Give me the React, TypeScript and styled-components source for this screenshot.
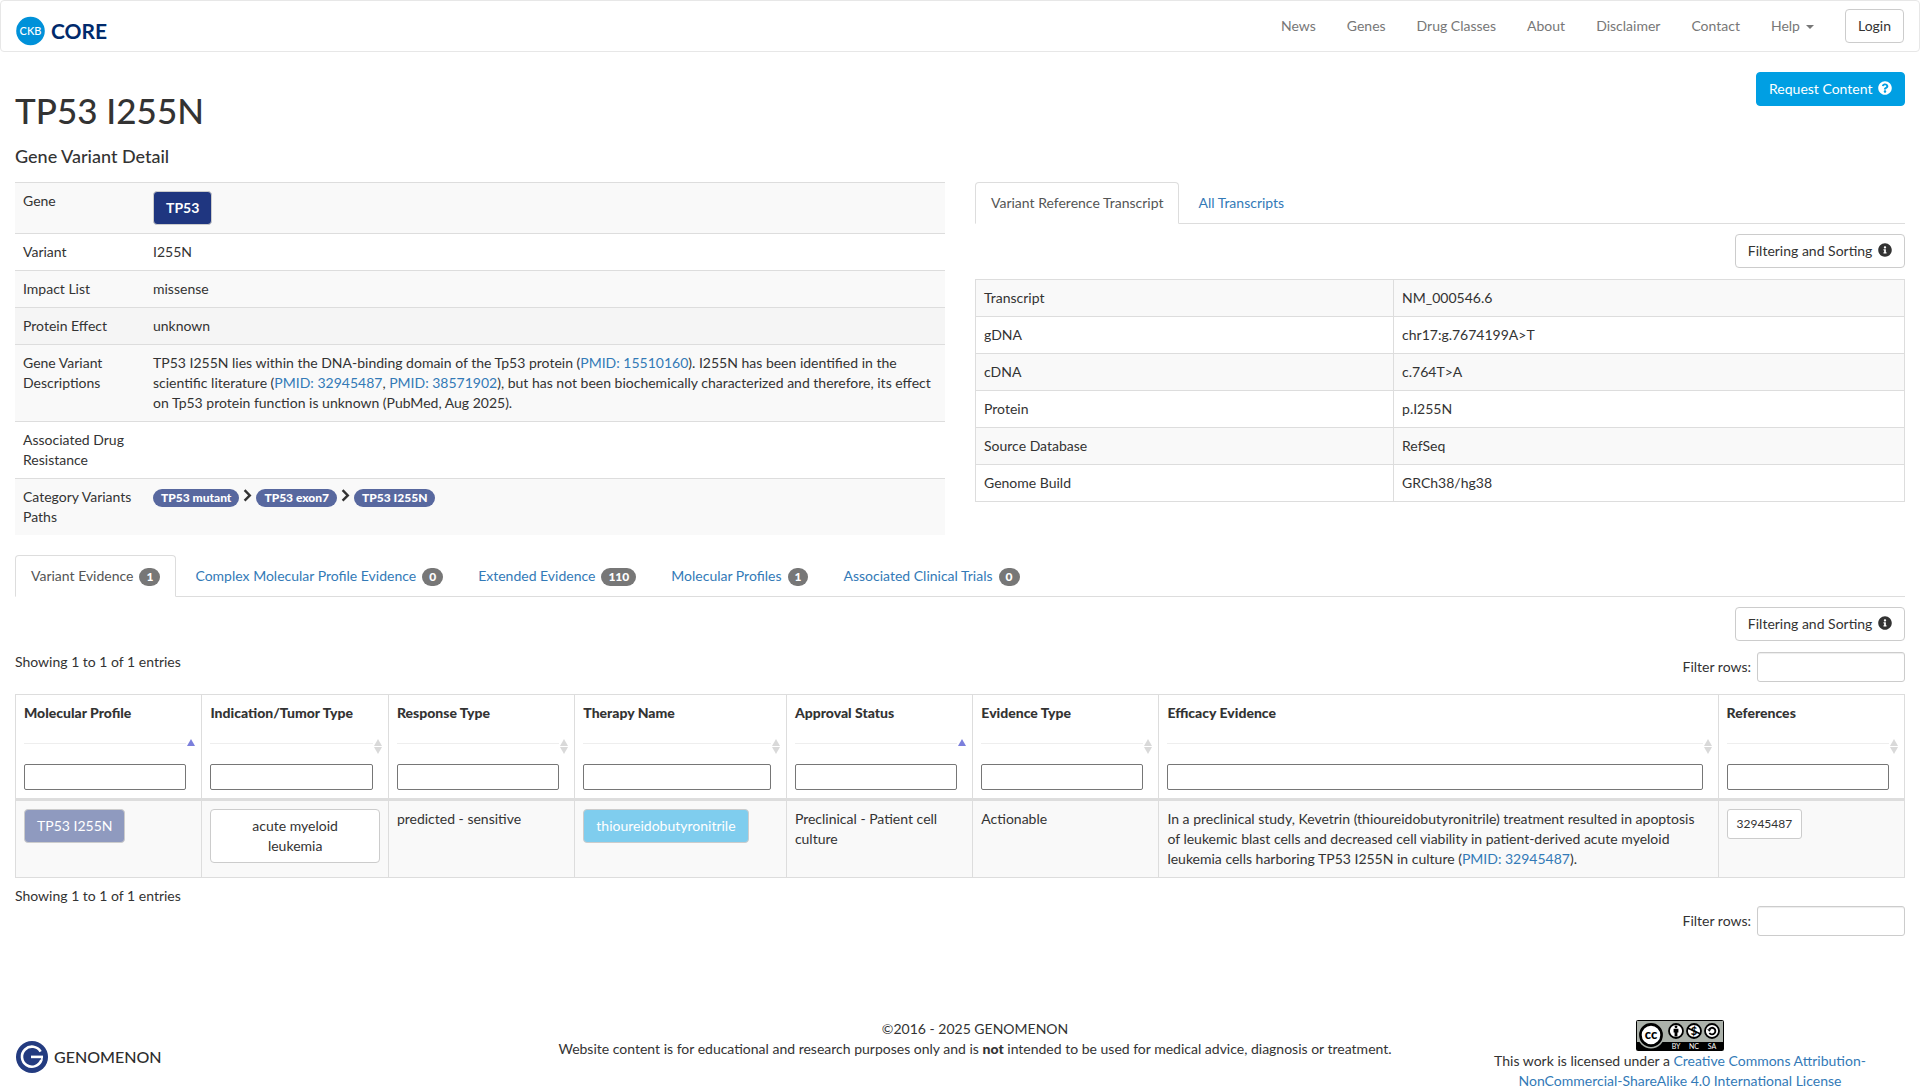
import React from "react";
import styled, { createGlobalStyle } from "styled-components";
import { FaInfoCircle, FaQuestionCircle } from "react-icons/fa";

const Global = createGlobalStyle`
  *, *::before, *::after { box-sizing: border-box; }
  body {
    margin: 0;
    background: #fff;
    color: #333;
    font-family: Lato, "Liberation Sans", sans-serif;
    font-size: 14px;
    line-height: 20px;
  }
  button, input { font-family: inherit; font-size: inherit; line-height: inherit; color: inherit; }
  a { color: #337ab7; text-decoration: none; }
  table { width: 100%; border-collapse: collapse; }
  h1, h2, p { margin: 0; font-weight: 500; }
`;

const Navbar = styled.nav`
  display: flex;
  justify-content: space-between;
  align-items: center;
  height: 52px;
  padding: 0 15px;
  border: 1px solid #e7e7e7;
  border-radius: 4px;
`;
const Brand = styled.a`
  display: flex;
  align-items: center;
  gap: 6px;
  padding-top: 10px;
  color: #002a6c;
  font-size: 21px;
  font-weight: 700;
`;
const NavLinks = styled.div`
  display: flex;
  align-items: center;
  gap: 31px;
`;
const NavLink = styled.a`
  color: #777;
`;
const Caret = styled.span`
  display: inline-block;
  margin-left: 6px;
  vertical-align: middle;
  border-top: 4px solid;
  border-left: 4px solid transparent;
  border-right: 4px solid transparent;
`;

type Tone = "plain" | "request" | "gene" | "profile" | "therapy";
const tones: Record<Tone, [string, string, string]> = {
  plain: ["#fff", "#333", "#ccc"],
  request: ["#009fe3", "#fff", "#009fe3"],
  gene: ["#1f3680", "#fff", "#ccc"],
  profile: ["#8f9abf", "#fff", "#ccc"],
  therapy: ["#7fcdee", "#fff", "#ccc"],
};
const Button = styled.button<{ $tone?: Tone; $small?: boolean; $strong?: boolean }>`
  padding: ${(p) => (p.$small ? "5px 9px" : "6px 12px")};
  border: 1px solid ${(p) => tones[p.$tone ?? "plain"][2]};
  border-radius: ${(p) => (p.$small ? 3 : 4)}px;
  background: ${(p) => tones[p.$tone ?? "plain"][0]};
  color: ${(p) => tones[p.$tone ?? "plain"][1]};
  font-size: ${(p) => (p.$small ? 12 : 14)}px;
  font-weight: ${(p) => (p.$strong ? 700 : 400)};
  line-height: ${(p) => (p.$small ? 18 : 20)}px;
  text-align: center;
  cursor: pointer;
  svg { margin-left: 2px; vertical-align: -1px; }
`;

const Page = styled.main`
  padding: 20px 15px 0;
`;
const TitleRow = styled.header`
  display: flex;
  justify-content: space-between;
  align-items: flex-start;
`;
const Title = styled.h1`
  padding-top: 18px;
  font-size: 35px;
  line-height: 40px;
`;
const Subtitle = styled.h2`
  padding: 16px 0;
  font-size: 18px;
  line-height: 20px;
`;
const Columns = styled.div`
  display: grid;
  grid-template-columns: 1fr 1fr;
  gap: 30px;
  margin-bottom: 20px;
`;

const DetailTable = styled.table`
  tr { border-top: 1px solid #ddd; }
  tr:nth-child(odd) { background: #f9f9f9; }
  tr:nth-child(4) { background: #f5f5f5; }
  th, td { padding: 8px; text-align: left; vertical-align: top; font-weight: 400; }
  th { width: 130px; }
  td { height: 36px; }
`;
const PathList = styled.div`
  display: flex;
  align-items: flex-start;
  gap: 4px;
  padding-top: 2px;
`;
const PathLabel = styled.a`
  padding: 3px 8px;
  border-radius: 10px;
  background: #58689f;
  color: #fff;
  font-size: 12px;
  line-height: 12px;
  font-weight: 900;
`;

const Tabs = styled.div`
  display: flex;
  gap: 3px;
  margin-bottom: 10px;
  border-bottom: 1px solid #ddd;
`;
const Tab = styled.button<{ $active?: boolean }>`
  margin-bottom: -1px;
  padding: 10px 15px;
  border: 1px solid ${(p) => (p.$active ? "#ddd" : "transparent")};
  border-bottom-color: ${(p) => (p.$active ? "#fff" : "transparent")};
  border-radius: 4px 4px 0 0;
  background: ${(p) => (p.$active ? "#fff" : "transparent")};
  color: ${(p) => (p.$active ? "#555" : "#337ab7")};
  white-space: nowrap;
  cursor: pointer;
`;
const Badge = styled.span`
  display: inline-block;
  margin-left: 6px;
  padding: 3px 7px;
  border-radius: 10px;
  background: #777;
  color: #fff;
  font-size: 12px;
  line-height: 12px;
  font-weight: 900;
  vertical-align: middle;
`;
const RightRow = styled.div`
  display: flex;
  justify-content: flex-end;
  margin-bottom: 11px;
`;

const TranscriptTable = styled.table`
  tr:nth-child(odd) { background: #f9f9f9; }
  th, td { padding: 8px; border: 1px solid #ddd; text-align: left; font-weight: 400; }
  th { width: 45%; }
`;

const FilterLabel = styled.label`
  display: flex;
  align-items: center;
  justify-content: flex-end;
  gap: 6px;
`;
const FilterInput = styled.input`
  width: 148px;
  height: 30px;
  padding: 5px 10px;
  border: 1px solid #ccc;
  border-radius: 3px;
  background: #fff;
  box-shadow: inset 0 1px 1px rgba(0, 0, 0, 0.075);
`;
const InfoBar = styled.div<{ $below?: boolean }>`
  display: flex;
  justify-content: space-between;
  padding: ${(p) => (p.$below ? "8px 0 0" : "0 0 12px")};
`;
const InfoText = styled.p`
  font-weight: 400;
`;
const LowFilter = styled.div`
  padding-top: 20px;
`;

const EvidenceTable = styled.table`
  table-layout: fixed;
  th, td { border: 1px solid #ddd; padding: 8px; text-align: left; vertical-align: top; }
  th { padding-right: 6px; border-bottom-width: 3px; }
  td { height: 77px; background: #f9f9f9; }
`;
const Head = styled.div`
  display: grid;
  grid-template-columns: 1fr 8px;
  column-gap: 1px;
`;
const HeadLabel = styled.label`
  grid-column: 1 / -1;
  margin-bottom: 16px;
  font-weight: 900;
`;
const Rule = styled.hr`
  width: 100%;
  margin: 4px 0 20px;
  border: 0;
  border-top: 1px solid #eee;
`;
const SortButton = styled.button`
  display: block;
  height: 15px;
  padding: 0;
  border: 0;
  background: none;
  cursor: pointer;
  svg { display: block; }
`;
const ColumnInput = styled.input`
  min-width: 0;
  width: 100%;
  height: 26px;
  padding: 1px 2px;
  border: 1px solid #767676;
  border-radius: 2px;
  background: #fff;
  font-weight: 400;
`;

const Footer = styled.footer`
  display: grid;
  grid-template-columns: 1fr 2fr 1fr;
  margin-top: 83px;
`;
const FootLogo = styled.a`
  display: flex;
  align-items: center;
  align-self: start;
  gap: 6px;
  padding: 22px 0 0 16px;
  color: #2d2d2d;
  font-size: 16px;
  font-weight: 500;
`;
const FootText = styled.div`
  padding-left: 30px;
  text-align: center;
  strong { font-weight: 900; }
`;
const License = styled.div`
  padding: 1px 15px 0;
  text-align: center;
  svg { display: block; margin: 0 auto; }
`;

const Chevron = () => (
  <svg width="9" height="14" viewBox="0 0 9 14" aria-hidden="true">
    <path d="M1.6 1.2 L6.8 6.4 L1.6 11.6" fill="none" stroke="#333" strokeWidth="2.4" />
  </svg>
);

const SortIcon = ({ sorted }: { sorted?: boolean }) => (
  <svg width="8" height="15" viewBox="0 0 8 15" aria-hidden="true">
    <path d="M4 0 L8 7 H0 Z" fill={sorted ? "#7b7fdc" : "#d9d9d9"} />
    {!sorted && <path d="M0 8 H8 L4 15 Z" fill="#d9d9d9" />}
  </svg>
);

const CkbLogo = () => (
  <svg width="29" height="30" viewBox="0 0 29 30" aria-hidden="true">
    <circle cx="14.5" cy="15" r="14.3" fill="#0091d9" />
    <text x="14.5" y="19" textAnchor="middle" fontSize="11" fontWeight="500" fill="#fff">CKB</text>
  </svg>
);

const GenomenonMark = () => (
  <svg width="32" height="32" viewBox="0 0 32 32" aria-hidden="true">
    <circle cx="16" cy="16" r="16" fill="#233b80" />
    <path d="M24.6 10.6 A10 10 0 1 0 25.4 19" fill="none" stroke="#fff" strokeWidth="2.6" />
    <path d="M15 15.9 H27" stroke="#fff" strokeWidth="2.6" />
    <path d="M25.9 16 V19.6" stroke="#fff" strokeWidth="1.6" />
  </svg>
);

const CcBadge = () => (
  <svg width="88" height="31" viewBox="0 0 88 31" role="img" aria-label="Creative Commons License">
    <rect x="0.5" y="0.5" width="87" height="30" rx="1" fill="#abb1aa" stroke="#000" />
    <rect x="1" y="22" width="86" height="8" fill="#000" />
    <circle cx="15" cy="15" r="13.5" fill="#abb1aa" />
    <circle cx="15" cy="15" r="10.6" fill="#fff" stroke="#000" strokeWidth="2.6" />
    <text x="15" y="19" textAnchor="middle" fontSize="13" fontWeight="900">cc</text>
    <circle cx="40" cy="11" r="7" fill="#fff" stroke="#000" strokeWidth="1.8" />
    <circle cx="40" cy="6.8" r="1.4" />
    <path d="M37.6 8.8 H42.4 V12.6 H41.4 V16.4 H38.6 V12.6 H37.6 Z" />
    <circle cx="58" cy="11" r="7" fill="#fff" stroke="#000" strokeWidth="1.8" />
    <text x="58" y="15" textAnchor="middle" fontSize="11" fontWeight="900">$</text>
    <path d="M51.6 8 L64.6 14" stroke="#000" strokeWidth="1.4" />
    <circle cx="76" cy="11" r="7" fill="#fff" stroke="#000" strokeWidth="1.8" />
    <path d="M73.2 9.4 A3.3 3.3 0 1 1 73.4 13" fill="none" stroke="#000" strokeWidth="1.9" />
    <path d="M71.2 9.2 H75.4 L73.3 11.8 Z" />
    <g fill="#fff" fontSize="7" fontWeight="400" textAnchor="middle">
      <text x="40" y="29">BY</text>
      <text x="58" y="29">NC</text>
      <text x="76" y="29">SA</text>
    </g>
  </svg>
);

const Pmid = ({ id }: { id: string }) => <a href={`#pmid-${id}`}>{`PMID: ${id}`}</a>;

const FilterHelp = () => (
  <RightRow>
    <Button type="button">Filtering and Sorting <FaInfoCircle size={14} /></Button>
  </RightRow>
);

const navItems = ["News", "Genes", "Drug Classes", "About", "Disclaimer", "Contact"];

const transcript = [
  ["Transcript", "NM_000546.6"],
  ["gDNA", "chr17:g.7674199A>T"],
  ["cDNA", "c.764T>A"],
  ["Protein", "p.I255N"],
  ["Source Database", "RefSeq"],
  ["Genome Build", "GRCh38/hg38"],
];

const evidenceTabs: [string, number][] = [
  ["Variant Evidence", 1],
  ["Complex Molecular Profile Evidence", 0],
  ["Extended Evidence", 110],
  ["Molecular Profiles", 1],
  ["Associated Clinical Trials", 0],
];

const columns = [
  { name: "Molecular Profile", width: "9.87%", sorted: true },
  { name: "Indication/Tumor Type", width: "9.87%" },
  { name: "Response Type", width: "9.87%" },
  { name: "Therapy Name", width: "11.2%" },
  { name: "Approval Status", width: "9.87%", sorted: true },
  { name: "Evidence Type", width: "9.85%" },
  { name: "Efficacy Evidence", width: "29.6%" },
  { name: "References", width: "9.87%" },
];

export default function App() {
  return (
    <>
      <Global />
      <Navbar>
        <Brand href="#home"><CkbLogo />CORE</Brand>
        <NavLinks>
          {navItems.map((n) => <NavLink key={n} href="#nav">{n}</NavLink>)}
          <NavLink href="#help">Help<Caret /></NavLink>
          <Button type="button">Login</Button>
        </NavLinks>
      </Navbar>

      <Page>
        <TitleRow>
          <Title>TP53 I255N</Title>
          <Button type="button" $tone="request">Request Content <FaQuestionCircle size={14} /></Button>
        </TitleRow>
        <Subtitle>Gene Variant Detail</Subtitle>

        <Columns>
          <DetailTable>
            <tbody>
              <tr><th scope="row">Gene</th><td><Button type="button" $tone="gene" $strong>TP53</Button></td></tr>
              <tr><th scope="row">Variant</th><td>I255N</td></tr>
              <tr><th scope="row">Impact List</th><td>missense</td></tr>
              <tr><th scope="row">Protein Effect</th><td>unknown</td></tr>
              <tr>
                <th scope="row">Gene Variant Descriptions</th>
                <td>
                  TP53 I255N lies within the DNA-binding domain of the Tp53 protein (<Pmid id="15510160" />). I255N has
                  been identified in the scientific literature (<Pmid id="32945487" />, <Pmid id="38571902" />), but has
                  not been biochemically characterized and therefore, its effect on Tp53 protein function is unknown
                  (PubMed, Aug 2025).
                </td>
              </tr>
              <tr><th scope="row">Associated Drug Resistance</th><td /></tr>
              <tr>
                <th scope="row">Category Variants Paths</th>
                <td>
                  <PathList>
                    <PathLabel href="#mutant">TP53 mutant</PathLabel>
                    <Chevron />
                    <PathLabel href="#exon7">TP53 exon7</PathLabel>
                    <Chevron />
                    <PathLabel href="#i255n">TP53 I255N</PathLabel>
                  </PathList>
                </td>
              </tr>
            </tbody>
          </DetailTable>

          <section>
            <Tabs role="tablist">
              <Tab type="button" role="tab" aria-selected $active>Variant Reference Transcript</Tab>
              <Tab type="button" role="tab">All Transcripts</Tab>
            </Tabs>
            <FilterHelp />
            <TranscriptTable>
              <tbody>
                {transcript.map(([k, v]) => (
                  <tr key={k}><th scope="row">{k}</th><td>{v}</td></tr>
                ))}
              </tbody>
            </TranscriptTable>
          </section>
        </Columns>

        <Tabs role="tablist">
          {evidenceTabs.map(([name, count], i) => (
            <Tab key={name} type="button" role="tab" aria-selected={i === 0} $active={i === 0}>
              {name}<Badge>{count}</Badge>
            </Tab>
          ))}
        </Tabs>
        <FilterHelp />
        <InfoBar>
          <InfoText>Showing 1 to 1 of 1 entries</InfoText>
          <FilterLabel>Filter rows:<FilterInput type="search" /></FilterLabel>
        </InfoBar>
        <EvidenceTable>
          <colgroup>
            {columns.map((c) => <col key={c.name} style={{ width: c.width }} />)}
          </colgroup>
          <thead>
            <tr>
              {columns.map((c, i) => (
                <th key={c.name} scope="col">
                  <Head>
                    <HeadLabel htmlFor={`column-${i}`}>{c.name}</HeadLabel>
                    <Rule />
                    <SortButton type="button" aria-label={`Sort by ${c.name}`}>
                      <SortIcon sorted={c.sorted} />
                    </SortButton>
                    <ColumnInput id={`column-${i}`} type="text" />
                  </Head>
                </th>
              ))}
            </tr>
          </thead>
          <tbody>
            <tr>
              <td><Button type="button" $tone="profile">TP53 I255N</Button></td>
              <td><Button type="button">acute myeloid leukemia</Button></td>
              <td>predicted - sensitive</td>
              <td><Button type="button" $tone="therapy">thioureidobutyronitrile</Button></td>
              <td>Preclinical - Patient cell culture</td>
              <td>Actionable</td>
              <td>
                In a preclinical study, Kevetrin (thioureidobutyronitrile) treatment resulted in apoptosis of leukemic
                blast cells and decreased cell viability in patient-derived acute myeloid leukemia cells harboring TP53
                I255N in culture (<Pmid id="32945487" />).
              </td>
              <td><Button type="button" $small>32945487</Button></td>
            </tr>
          </tbody>
        </EvidenceTable>
        <InfoBar $below>
          <InfoText>Showing 1 to 1 of 1 entries</InfoText>
          <LowFilter>
            <FilterLabel>Filter rows:<FilterInput type="search" /></FilterLabel>
          </LowFilter>
        </InfoBar>
      </Page>

      <Footer>
        <FootLogo href="#genomenon"><GenomenonMark />GENOMENON</FootLogo>
        <FootText>
          ©2016 - 2025 GENOMENON<br />
          Website content is for educational and research purposes only and is <strong>not</strong> intended to be used
          for medical advice, diagnosis or treatment.
        </FootText>
        <License>
          <CcBadge />
          This work is licensed under a{" "}
          <a href="#license">Creative Commons Attribution-NonCommercial-ShareAlike 4.0 International License</a>
        </License>
      </Footer>
    </>
  );
}
